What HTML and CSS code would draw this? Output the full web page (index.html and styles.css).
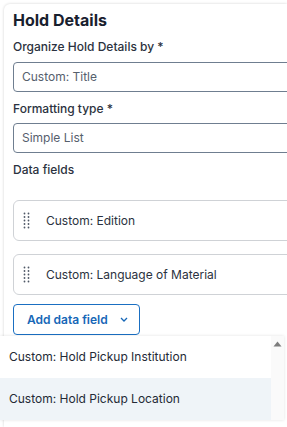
FILE: index.html
```html
<!DOCTYPE html>
<html lang="en">
<head>
    <meta charset="UTF-8">
    <meta name="viewport" content="width=device-width, initial-scale=1.0">
    <title>Hold Details</title>
    <link rel="stylesheet" href="styles.css">
</head>
<body>
    <div class="panel">
        <h2>Hold Details</h2>
        <label class="field-label">Organize Hold Details by *</label>
        <div class="select-box">Custom: Title</div>
        <label class="field-label second">Formatting type *</label>
        <div class="select-box small-gap">Simple List</div>
        <div class="field-label second">Data fields</div>

        <div class="data-list">
            <div class="data-item">
                <svg class="handle" width="8" height="17" viewBox="0 0 8 17">
                    <g fill="#4f5866">
                        <circle cx="1.5" cy="1.5" r="0.9"/><circle cx="5.5" cy="1.5" r="0.9"/>
                        <circle cx="1.5" cy="5" r="0.9"/><circle cx="5.5" cy="5" r="0.9"/>
                        <circle cx="1.5" cy="8.5" r="0.9"/><circle cx="5.5" cy="8.5" r="0.9"/>
                        <circle cx="1.5" cy="12" r="0.9"/><circle cx="5.5" cy="12" r="0.9"/>
                        <circle cx="1.5" cy="15.5" r="0.9"/><circle cx="5.5" cy="15.5" r="0.9"/>
                    </g>
                </svg>
                <span>Custom: Edition</span>
            </div>
            <div class="data-item">
                <svg class="handle" width="8" height="17" viewBox="0 0 8 17">
                    <g fill="#4f5866">
                        <circle cx="1.5" cy="1.5" r="0.9"/><circle cx="5.5" cy="1.5" r="0.9"/>
                        <circle cx="1.5" cy="5" r="0.9"/><circle cx="5.5" cy="5" r="0.9"/>
                        <circle cx="1.5" cy="8.5" r="0.9"/><circle cx="5.5" cy="8.5" r="0.9"/>
                        <circle cx="1.5" cy="12" r="0.9"/><circle cx="5.5" cy="12" r="0.9"/>
                        <circle cx="1.5" cy="15.5" r="0.9"/><circle cx="5.5" cy="15.5" r="0.9"/>
                    </g>
                </svg>
                <span>Custom: Language of Material</span>
            </div>
        </div>

        <button class="add-btn">
            Add data field
            <svg width="8" height="5" viewBox="0 0 8 5"><path d="M1 1 L4 4 L7 1" fill="none" stroke="#1667b7" stroke-width="1.3"/></svg>
        </button>
    </div>

    <div class="menu">
        <ul class="menu-list">
            <li>Custom: Hold Pickup Institution</li>
            <li class="active">Custom: Hold Pickup Location</li>
        </ul>
        <div class="scrollbar">
            <svg width="9" height="6" viewBox="0 0 9 6"><path d="M0.5 5.5 L4.5 0.5 L8.5 5.5 Z" fill="#7d7d7d"/></svg>
        </div>
    </div>
</body>
</html>
```

FILE: styles.css
```css
body {
    margin: 0;
    font-family: Inter, "Noto Sans", sans-serif;
    background: #fff;
    overflow: hidden;
    height: 427px;
    position: relative;
}
.panel {
    margin: 4px 0 0 4px;
    width: 283px;
    height: 423px;
    padding: 6px 0 0 9px;
    box-sizing: border-box;
    overflow: hidden;
    border-radius: 6px 0 0 0;
    box-shadow: 0 0 3px rgba(0, 0, 0, 0.18);
    color: #1d2533;
}
h2 {
    margin: 0;
    font-size: 16px;
    line-height: 20px;
    font-weight: 700;
    color: #18202e;
}
.field-label {
    display: block;
    margin-top: 8px;
    font-size: 12px;
    line-height: 18px;
    font-weight: 500;
    color: #2b3240;
}
.select-box {
    margin-top: 6px;
    margin-right: -20px;
    height: 30px;
    box-sizing: border-box;
    border: 1px solid #6f7e90;
    border-radius: 4px;
    padding: 0 8px;
    font-size: 12px;
    line-height: 28px;
    color: #56606d;
}
.select-box.small-gap {
    margin-top: 5px;
}
.data-list {
    margin-top: 21px;
    margin-right: -20px;
    display: flex;
    flex-direction: column;
    gap: 13px;
}
.data-item {
    height: 41px;
    box-sizing: border-box;
    border: 1px solid #cfd2d6;
    border-radius: 6px;
    display: flex;
    align-items: center;
    padding-left: 9px;
    font-size: 12px;
    color: #2b3240;
}
.handle {
    margin-right: 15px;
}
.add-btn {
    margin-top: 9px;
    height: 31px;
    width: 127px;
    border: 1px solid #1a6fc2;
    border-radius: 4px;
    background: #fff;
    color: #1667b7;
    font-family: inherit;
    font-size: 12px;
    font-weight: 600;
    display: flex;
    align-items: center;
    padding: 0 0 0 13px;
    gap: 12px;
}
.menu {
    position: absolute;
    left: 0;
    top: 336px;
    width: 284px;
    height: 84px;
    display: flex;
    background: #fff;
    box-shadow: 0 0 3px rgba(0, 0, 0, 0.12);
}
.menu-list {
    list-style: none;
    margin: 0;
    padding: 0;
    flex: 1;
}
.menu-list li {
    height: 42px;
    line-height: 42px;
    padding-left: 9px;
    font-size: 12px;
    color: #242a36;
}
.menu-list li.active {
    background: #eff4f8;
}
.scrollbar {
    width: 13px;
    background: #fafafa;
    display: flex;
    justify-content: center;
    padding-top: 5px;
    box-sizing: border-box;
}
```
